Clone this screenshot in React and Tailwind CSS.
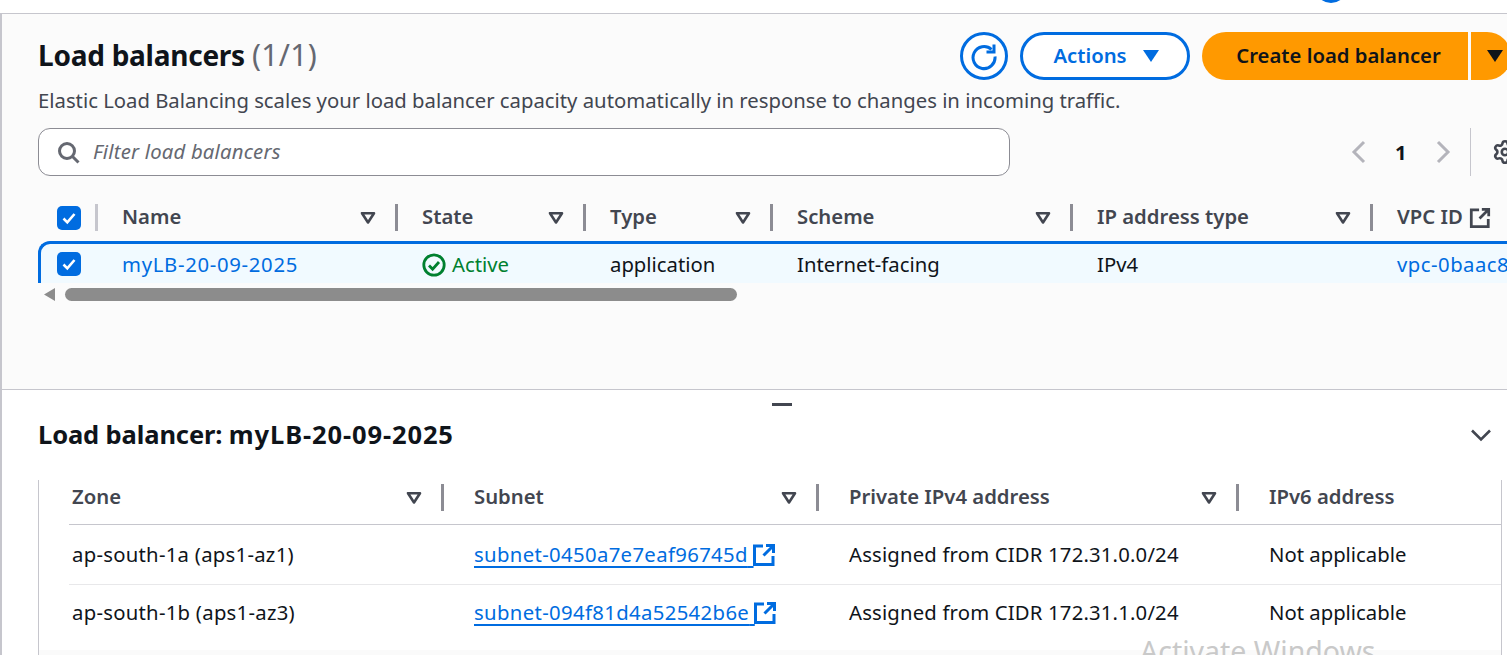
import React from 'react'
import { Settings } from 'lucide-react'

// table columns of the upper list, widths taken between the divider bars
const lb_columns = [
   { label: 'Name', width: 'w-[300px]' },
   { label: 'State', width: 'w-[188px]' },
   { label: 'Type', width: 'w-[187px]' },
   { label: 'Scheme', width: 'w-[300px]' },
   { label: 'IP address type', width: 'w-[300px]' },
]

const zone_rows = [
   { zone: 'ap-south-1a (aps1-az1)', subnet: 'subnet-0450a7e7eaf96745d', cidr: 'Assigned from CIDR 172.31.0.0/24' },
   { zone: 'ap-south-1b (aps1-az3)', subnet: 'subnet-094f81d4a52542b6e', cidr: 'Assigned from CIDR 172.31.1.0/24' },
]

const SortIcon = () => (
   <svg width="16" height="14" viewBox="0 0 16 14" className="shrink-0">
      <path d="M2 2.2h12L8 11.5z" fill="none" stroke="#424650" strokeWidth="2.6" strokeLinejoin="round" />
   </svg>
)

const Divider = () => <span className="block w-[3px] h-[27px] bg-[#8c8c94] shrink-0" />

const External = ({ color = '#006ce0', size = 24 }) => (
   <svg width={size} height={size} viewBox="0 0 24 24" className="shrink-0">
      <path d="M11 3H2.5v18.5H21V13" fill="none" stroke={color} strokeWidth="3" />
      <path d="M14 2.5h7.5V10M21 3l-9.5 9.5" fill="none" stroke={color} strokeWidth="3" />
   </svg>
)

const Checkbox = () => (
   <span className="flex items-center justify-center w-6 h-6 shrink-0 rounded-[5px] bg-[#006ce0]">
      <svg width="16" height="16" viewBox="0 0 16 16">
         <path d="M2.5 8.5l3.8 3.8L13.5 4" fill="none" stroke="#fff" strokeWidth="2.6" />
      </svg>
   </span>
)

const Caret = ({ color }) => (
   <svg width="16" height="14" viewBox="0 0 16 14">
      <path d="M0 1h16L8 13z" fill={color} />
   </svg>
)

const Page = () => (
   <div className="relative w-[1507px] h-[655px] overflow-hidden bg-white font-['Noto_Sans',sans-serif] text-[20.3px] text-[#0f141a]">
      {/* something round cut off by the top edge of the capture */}
      <div className="absolute left-[1315px] top-[-29px] w-8 h-8 rounded-full bg-[#006ce0]" />

      <div className="h-[13px]" />

      <div className="h-[377px] border-t border-b border-l-2 border-[#c6c6cd] bg-[#fbfbfb] pt-[18px] pl-9">
         {/* header */}
         <div className="flex items-center h-12">
            <h1 className="text-[28px] font-bold tracking-[-0.25px] w-[922px] shrink-0 pb-[4px]">
               Load balancers <span className="font-normal text-[30px] tracking-[0.3px] text-[#656871]">(1/1)</span>
            </h1>
            <button className="flex items-center justify-center w-12 h-12 shrink-0 rounded-full border-[3px] border-[#006ce0] bg-white">
               <svg width="30" height="30" viewBox="0 0 30 30">
                  <path d="M22.5 8.5A11 11 0 1 0 26 15.5" fill="none" stroke="#006ce0" strokeWidth="3" />
                  <path d="M25 3.5v7.5h-7.5" fill="none" stroke="#006ce0" strokeWidth="3" />
               </svg>
            </button>
            <button className="flex items-center justify-center gap-[16px] pl-[2px] ml-3 w-[170px] h-12 shrink-0 rounded-full border-[3px] border-[#006ce0] bg-white font-semibold text-[#006ce0]">
               <span className="pb-[2px]">Actions</span> <Caret color="#006ce0" />
            </button>
            <button className="ml-3 w-[266px] h-12 shrink-0 rounded-l-full bg-[#ff9900] pl-[7px] pb-[2px] font-semibold">
               Create load balancer
            </button>
            <button className="flex items-center ml-[3px] pl-[16px] w-[40px] h-12 shrink-0 rounded-r-full bg-[#ff9900]">
               <Caret color="#0f141a" />
            </button>
         </div>

         <p className="mt-[5px] leading-[30px] text-[#424650] whitespace-nowrap">
            Elastic Load Balancing scales your load balancer capacity automatically in response to changes in incoming traffic.
         </p>

         {/* filter + pagination */}
         <div className="flex items-center mt-[13px] h-12">
            <div className="flex items-center w-[972px] h-12 shrink-0 pl-[18px] gap-[13px] rounded-[12px] border border-[#8c8c94] bg-white">
               <svg width="23" height="23" viewBox="0 0 23 23" className="shrink-0">
                  <circle cx="10" cy="10" r="7.5" fill="none" stroke="#656871" strokeWidth="3" />
                  <path d="M15.5 15.5l6 6" stroke="#656871" strokeWidth="3" />
               </svg>
               <span className="italic tracking-[0.2px] pb-[2px] text-[#656871]">Filter load balancers</span>
            </div>
            <svg width="16" height="24" viewBox="0 0 16 24" className="ml-[341px] shrink-0">
               <path d="M13 2L3 12l10 10" fill="none" stroke="#b4b4bb" strokeWidth="3" />
            </svg>
            <span className="ml-[28px] w-[10px] shrink-0 font-bold">1</span>
            <svg width="16" height="24" viewBox="0 0 16 24" className="ml-[30px] shrink-0">
               <path d="M3 2l10 10L3 22" fill="none" stroke="#b4b4bb" strokeWidth="3" />
            </svg>
            <span className="ml-[19px] w-px h-12 bg-[#c6c6cd] shrink-0" />
            <Settings size={26} strokeWidth={2.4} color="#424650" className="ml-[21px] shrink-0" />
         </div>

         {/* table head */}
         <div className="flex items-center mt-[28px] h-[27px] w-[1600px] font-semibold text-[#424650]">
            <div className="flex items-center w-[58px] pl-[19px] shrink-0">
               <Checkbox />
               <span className="ml-[14px] w-[3px] h-[27px] shrink-0 bg-[#c6c6cd]" />
            </div>
            {lb_columns.map(col => (
               <div key={col.label} className={`flex items-center shrink-0 pl-[26px] ${col.width}`}>
                  <span className="grow pb-[2px]">{col.label}</span>
                  <SortIcon />
                  <span className="ml-[19px] -mr-[2px]"><Divider /></span>
               </div>
            ))}
            <div className="flex items-center gap-[6px] pl-[26px] shrink-0">
               <span className="pb-[3px]">VPC ID</span> <External color="#424650" size={22} />
            </div>
         </div>

         {/* selected row */}
         <div className="relative flex items-center mt-[10px] pt-[2px] w-[1600px] h-[42px] bg-[#f1faff] border-t-[3px] border-l-[3px] border-[#006ce0] rounded-tl-[12px]">
            <div className="w-[55px] pl-[16px] -mt-[2px] shrink-0">
               <Checkbox />
            </div>
            <div className="w-[300px] pl-[26px] shrink-0 tracking-[0.7px] text-[#006ce0]">myLB-20-09-2025</div>
            <div className="flex items-center gap-[6px] w-[188px] pl-[26px] shrink-0 text-[#00802f]">
               <svg width="24" height="24" viewBox="0 0 24 24" className="shrink-0">
                  <circle cx="12" cy="12" r="10.2" fill="none" stroke="#00802f" strokeWidth="2.8" />
                  <path d="M7 12.5l3.6 3.6L17 9" fill="none" stroke="#00802f" strokeWidth="2.8" />
               </svg>
               Active
            </div>
            <div className="w-[187px] pl-[26px] shrink-0">application</div>
            <div className="w-[300px] pl-[26px] shrink-0">Internet-facing</div>
            <div className="w-[300px] pl-[26px] shrink-0">IPv4</div>
            <div className="pl-[26px] shrink-0 tracking-[0.5px] text-[#006ce0]">vpc-0baac8f1a2c</div>
         </div>

         {/* scrollbar */}
         <div className="flex items-center mt-[5px] h-[13px]">
            <svg width="11" height="13" viewBox="0 0 11 13" className="ml-[6px] shrink-0">
               <path d="M11 0v13L0 6.5z" fill="#8c8c8c" />
            </svg>
            <span className="ml-[10px] w-[672px] h-[13px] rounded-full bg-[#8c8c8c]" />
         </div>
      </div>

      {/* details panel */}
      <div className="relative h-[265px] border-l-2 border-[#c6c6cd] pl-9">
         <div className="absolute left-[770px] top-[13px] w-5 h-[3px] bg-[#424650]" />

         <div className="flex items-center justify-between pt-[27px] pr-[15px] h-[63px]">
            <h2 className="text-[25.5px] font-bold pb-[2px] whitespace-pre">
               <span className="tracking-[-0.12px]">Load balancer: </span>
               <span className="tracking-[0.88px]">myLB-20-09-2025</span>
            </h2>
            <svg width="22" height="14" viewBox="0 0 22 14">
               <path d="M2 2.5l9 9 9-9" fill="none" stroke="#424650" strokeWidth="2.6" />
            </svg>
         </div>

         <div className="mt-[27px] w-[1464px] h-[175px] border-l border-r border-[#c6c6cd] pl-[30px]">
            <div className="flex items-start pt-[4px] h-[45px] border-b border-[#c6c6cd] font-semibold text-[#424650]">
               <div className="flex items-center w-[375px] pl-[3px] shrink-0">
                  <span className="grow self-start leading-[24px]">Zone</span><SortIcon /><span className="ml-[19px]"><Divider /></span>
               </div>
               <div className="flex items-center w-[375px] pl-[30px] shrink-0">
                  <span className="grow self-start leading-[24px]">Subnet</span><SortIcon /><span className="ml-[19px]"><Divider /></span>
               </div>
               <div className="flex items-center w-[420px] pl-[30px] shrink-0">
                  <span className="grow self-start leading-[24px]">Private IPv4 address</span><SortIcon /><span className="ml-[19px]"><Divider /></span>
               </div>
               <div className="pl-[30px] leading-[24px]">IPv6 address</div>
            </div>
            {zone_rows.map((row, index) => (
               <div key={row.subnet} className={`flex items-center ${index === 0 ? 'h-[60px] border-b border-[#e8e8ea]' : 'h-[55px]'}`}>
                  <div className="w-[375px] pl-[3px] shrink-0 tracking-[0.27px]">{row.zone}</div>
                  <div className="flex items-center w-[375px] pl-[30px] shrink-0 text-[#006ce0]">
                     <a className="underline decoration-2 underline-offset-[4px] tracking-[0.36px] whitespace-pre">{row.subnet} </a>
                     <span className="-ml-[2px]"><External /></span>
                  </div>
                  <div className="w-[420px] pl-[30px] shrink-0 tracking-[0.18px]">{row.cidr}</div>
                  <div className="pl-[30px]">Not applicable</div>
               </div>
            ))}
            <div className="mt-[10px] h-[5px] -ml-[30px] bg-[#fafafa]" />
         </div>
      </div>

      {/* windows watermark over the page */}
      <div className="absolute left-[1140px] top-[633px] text-[28.5px] leading-[36px] text-[#c9c9c9] whitespace-nowrap">Activate Windows</div>
   </div>
)

export default function App() {
   return <Page />
}
